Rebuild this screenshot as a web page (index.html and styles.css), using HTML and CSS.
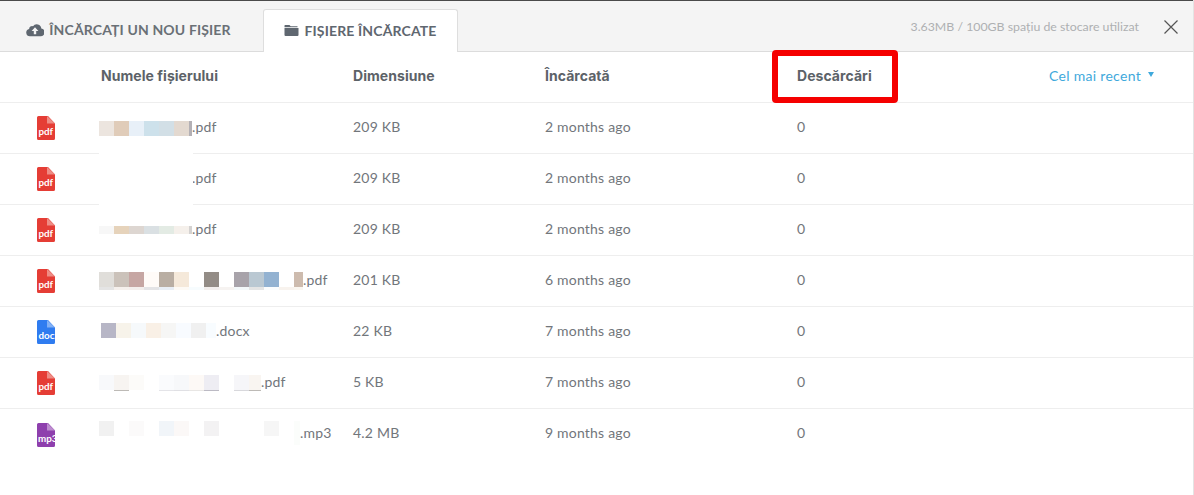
FILE: index.html
```html
<!DOCTYPE html>
<html lang="ro">
<head>
<meta charset="utf-8">
<title>Fișiere încărcate</title>
<link rel="stylesheet" href="styles.css">
</head>
<body>
<div class="modal">
  <header class="topbar">
    <div class="tab">
      <svg class="tab-icon" width="18" height="14" viewBox="0 0 18 14"><path fill="#5f6770" d="M4 13.2a3.7 3.7 0 0 1-.9-7.3A3 3 0 0 1 7 3.2 4.6 4.6 0 0 1 15.300 5.500 3.900 3.900 0 0 1 14 13.200z"/><path fill="#f4f4f4" d="M9 4.200l3.400 3.700h-2.200v3.300H7.800V7.900H5.600z"/></svg>
      <span>ÎNCĂRCAȚI UN NOU FIȘIER</span>
    </div>
    <div class="tab tab-active">
      <svg class="tab-icon" width="15" height="11" viewBox="0 0 15 11"><path fill="#5f6770" d="M1 0h4.500l1.200 1.200H13.500v1H.5V.5zM.5 3h14v7a1 1 0 0 1-1 1h-12a1 1 0 0 1-1-1z"/></svg>
      <span>FIȘIERE ÎNCĂRCATE</span>
    </div>
    <div class="storage">3.63MB / 100GB spațiu de stocare utilizat</div>
    <svg class="close" width="14" height="14" viewBox="0 0 14 14"><path fill="none" stroke="#555" stroke-width="1.200" d="M.5.5l13 13M13.500.5l-13 13"/></svg>
  </header>

  <div class="row head">
    <div></div>
    <div>Numele fișierului</div>
    <div>Dimensiune</div>
    <div>Încărcată</div>
    <div class="dl-cell">Descărcări<span class="highlight"></span></div>
    <div class="sort">Cel mai recent <span class="caret"></span></div>
  </div>

  <div class="row">
    <svg class="ficon" width="18" height="24" viewBox="0 0 18 24"><path class="pdf" d="M1.500 0H11l7 7.500V22.500A1.500 1.500 0 0 1 16.500 24h-15A1.500 1.500 0 0 1 0 22.500v-21A1.500 1.500 0 0 1 1.500 0z"/><path class="pdf-fold" d="M10 0l8 7.500h-8z"/><text x="1.500" y="19">pdf</text></svg>
    <div class="name"><span class="blur m18"><i class="a1"></i><i class="a2"></i><i class="a3"></i><i class="a4"></i><i class="a5"></i><i class="a6"></i><i class="a7 w4"></i></span>.pdf</div>
    <div>209 KB</div><div>2 months ago</div><div>0</div><div></div>
  </div>

  <div class="row">
    <svg class="ficon" width="18" height="24" viewBox="0 0 18 24"><path class="pdf" d="M1.500 0H11l7 7.500V22.500A1.500 1.500 0 0 1 16.500 24h-15A1.500 1.500 0 0 1 0 22.500v-21A1.500 1.500 0 0 1 1.500 0z"/><path class="pdf-fold" d="M10 0l8 7.500h-8z"/><text x="1.500" y="19">pdf</text></svg>
    <div class="name"><span class="blur blur-empty"></span>.pdf<span class="erase"></span></div>
    <div>209 KB</div><div>2 months ago</div><div>0</div><div></div>
  </div>

  <div class="row">
    <svg class="ficon" width="18" height="24" viewBox="0 0 18 24"><path class="pdf" d="M1.500 0H11l7 7.500V22.500A1.500 1.500 0 0 1 16.500 24h-15A1.500 1.500 0 0 1 0 22.500v-21A1.500 1.500 0 0 1 1.500 0z"/><path class="pdf-fold" d="M10 0l8 7.500h-8z"/><text x="1.500" y="19">pdf</text></svg>
    <div class="name"><span class="blur m21 short"><i class="b1"></i><i class="b2"></i><i class="b3"></i><i class="b4"></i><i class="b5"></i><i class="b6"></i><i class="b7 w4"></i></span>.pdf</div>
    <div>209 KB</div><div>2 months ago</div><div>0</div><div></div>
  </div>

  <div class="row">
    <svg class="ficon" width="18" height="24" viewBox="0 0 18 24"><path class="pdf" d="M1.500 0H11l7 7.500V22.500A1.500 1.500 0 0 1 16.500 24h-15A1.500 1.500 0 0 1 0 22.500v-21A1.500 1.500 0 0 1 1.500 0z"/><path class="pdf-fold" d="M10 0l8 7.500h-8z"/><text x="1.500" y="19">pdf</text></svg>
    <div class="name"><span class="blur m16"><i class="c1"></i><i class="c2"></i><i class="c3"></i><i class="c4"></i><i class="c5"></i><i class="c6"></i><i class="c0"></i><i class="c7"></i><i class="c00"></i><i class="c8"></i><i class="c9"></i><i class="c10"></i><i class="c000"></i><i class="c11 w9"></i></span>.pdf</div>
    <div>201 KB</div><div>6 months ago</div><div>0</div><div></div>
  </div>

  <div class="row">
    <svg class="ficon" width="18" height="24" viewBox="0 0 18 24"><path class="doc" d="M1.500 0H11l7 7.500V22.500A1.500 1.500 0 0 1 16.500 24h-15A1.500 1.500 0 0 1 0 22.500v-21A1.500 1.500 0 0 1 1.500 0z"/><path class="doc-fold" d="M10 0l8 7.500h-8z"/><text x="1.500" y="19">docx</text></svg>
    <div class="name"><span class="blur m16 blur-shift"><i class="d1"></i><i class="d2"></i><i class="d3"></i><i class="d4"></i><i class="d5"></i><i class="d6"></i><i class="d7"></i><i class="d8 w10"></i></span>.docx</div>
    <div>22 KB</div><div>7 months ago</div><div>0</div><div></div>
  </div>

  <div class="row">
    <svg class="ficon" width="18" height="24" viewBox="0 0 18 24"><path class="pdf" d="M1.500 0H11l7 7.500V22.500A1.500 1.500 0 0 1 16.500 24h-15A1.500 1.500 0 0 1 0 22.500v-21A1.500 1.500 0 0 1 1.500 0z"/><path class="pdf-fold" d="M10 0l8 7.500h-8z"/><text x="1.500" y="19">pdf</text></svg>
    <div class="name"><span class="blur m17"><i class="e1"></i><i class="e2"></i><i class="e3"></i><i></i><i class="e4"></i><i class="e5"></i><i class="e6"></i><i class="e7"></i><i></i><i class="e8"></i><i class="e9 w12"></i></span>.pdf</div>
    <div>5 KB</div><div>7 months ago</div><div>0</div><div></div>
  </div>

  <div class="row last">
    <svg class="ficon" width="18" height="24" viewBox="0 0 18 24"><path class="mp3" d="M1.500 0H11l7 7.500V22.500A1.500 1.500 0 0 1 16.500 24h-15A1.500 1.500 0 0 1 0 22.500v-21A1.500 1.500 0 0 1 1.500 0z"/><path class="mp3-fold" d="M10 0l8 7.500h-8z"/><text x="1" y="19">mp3</text></svg>
    <div class="name"><span class="blur m12"><i class="f1"></i><i></i><i class="f2"></i><i></i><i class="f3"></i><i class="f4"></i><i></i><i class="f5"></i><i></i><i></i><i></i><i class="f6"></i><i></i><i class="f7 w6"></i></span>.mp3</div>
    <div>4.2 MB</div><div>9 months ago</div><div>0</div><div></div>
  </div>
</div>
</body>
</html>
```
FILE: styles.css
```css
* { box-sizing: border-box; }
html, body { margin: 0; height: 100%; background: #fff; overflow: hidden; }
body { font-family: "Lato", "Liberation Sans", sans-serif; color: #72767b; }
.modal { height: 495px; border-right: 1px solid #e4e4e4; }

.topbar {
  display: flex; align-items: flex-end; height: 52px; padding-left: 10px;
  background: #f4f4f4; border-top: 1px solid #4a4a4a; border-bottom: 1px solid #dcdcdc;
}
.tab {
  display: flex; align-items: center; justify-content: center; gap: 5px;
  height: 43px; width: 237px; padding-bottom: 2px; margin-bottom: -1px;
  font-size: 14px; font-weight: 700; color: #6a7076; letter-spacing: .14px;
}
.tab-active {
  width: 195px; margin-left: 16px; background: #fff; color: #5f6770;
  border: 1px solid #dedede; border-bottom: 0; border-radius: 3px 3px 0 0;
}
.storage { margin-left: auto; align-self: center; font-size: 12.340px; color: #aeb0b2; margin-right: 25px; margin-top: 1px; }
.close { align-self: center; margin-right: 15px; margin-top: 2px; }

.row {
  display: grid; grid-template-columns: 101px 252px 192px 252px 120px 1fr; align-items: center;
  height: 51px; padding-bottom: 4px; border-bottom: 1px solid #eeeeee; font-size: 14px; letter-spacing: .2px;
}
.row.last { border-bottom: 0; }
.head { font-family: "Inter", "Lato", sans-serif; font-weight: 700; font-size: 14px; letter-spacing: .05px; color: #5c6268; }
.ficon { margin-left: 37px; margin-top: 4px; overflow: hidden; }
.ficon text { font: 700 9.800px "Lato", sans-serif; fill: #fff; letter-spacing: 0; }
.pdf { fill: #e53d35; } .pdf-fold { fill: #ee8c85; }
.doc { fill: #2f7cf0; } .doc-fold { fill: #82b0f5; }
.mp3 { fill: #8e3fad; } .mp3-fold { fill: #bd8ccf; }

.dl-cell { position: relative; }
.highlight {
  position: absolute; left: -25px; top: -17px; width: 126px; height: 53px;
  border: 6px solid #f50000; border-radius: 4px;
}
.sort {
  display: flex; align-items: center; justify-content: flex-end; gap: 7px; padding-right: 39px;
  font-family: "Lato", sans-serif; font-weight: 400; font-size: 14px; letter-spacing: .3px; color: #3fa9dc;
}
.caret { width: 0; height: 0; border-left: 3.500px solid transparent; border-right: 3.500px solid transparent; border-top: 5px solid #3fa9dc; margin-bottom: 2px; }

.name { position: relative; display: flex; align-items: center; align-self: stretch; }
.blur { display: flex; height: 15px; align-self: flex-start; margin-left: -2px; }
.blur i { display: block; width: 15px; height: 15px; flex: none; }
.blur.short, .blur.short i { height: 8px; }
.blur i.w4 { width: 3px; }
.blur i.w6 { width: 6px; }
.blur i.w9 { width: 9px; }
.blur i.w10 { width: 10px; }
.blur i.w12 { width: 12px; }
.m12 { margin-top: 12px; } .m16 { margin-top: 16px; } .m17 { margin-top: 17px; } .m18 { margin-top: 18px; } .m21 { margin-top: 21px; }
.blur-empty { width: 93px; height: 0; }
.blur-shift { margin-left: 0; }
.erase { position: absolute; left: -2px; top: -17px; width: 94px; height: 90px; background: #fff; }

.a1 { background: #ece5df; } .a2 { background: #e0ccb9; } .a3 { background: #e8f0f8; } .a4 { background: #cde1eb; } .a5 { background: #d2dfe6; } .a6 { background: #e3d9d0; } .a7 { background: #b3b0b5; }
.b1 { background: #f7f7f7; } .b2 { background: #e6d3bb; } .b3 { background: #ddd6d1; } .b4 { background: #dae0e3; } .b5 { background: #e3ebe4; } .b6 { background: #f5f0eb; } .b7 { background: #d4d2d1; }
.c1 { background: #e0deda; box-shadow: 0 3px #e4e4e4; } .c2 { background: #cbc2ba; box-shadow: 0 3px #f5f0ec; } .c3 { background: #c6a6a3; box-shadow: 0 3px #f3eeec; } .c4 { background: #fffbf8; box-shadow: 0 3px #e4e4e6; } .c5 { background: #b9aea3; box-shadow: 0 3px #e8eef5; } .c6 { background: #f5e9da; box-shadow: 0 3px #fdfaf5; } .c0 { box-shadow: 0 3px #f7fcfe; } .c7 { background: #938c86; box-shadow: 0 3px #f2eeec; } .c00 { box-shadow: 0 3px #f6f3f1; } .c8 { background: #a8a3aa; box-shadow: 0 3px #f3f8fa; } .c9 { background: #bac8d2; box-shadow: 0 3px #e4e4e4; } .c10 { background: #93b2d1; box-shadow: 0 3px #fafcfd; } .c000 { box-shadow: 0 3px #f8f3ee; } .c11 { background: #cdbbae; box-shadow: 0 3px #faf6f0; }
.d1 { background: #b7b6c6; } .d2 { background: #f7f3ea; } .d3 { background: #f6f9fb; } .d4 { background: #f9f0e6; } .d5 { background: #f6f6f5; } .d6 { background: #f8fbff; } .d7 { background: #f0f0f0; } .d8 { background: #f8fcff; }
.e1 { background: #f8f9fb; } .e2 { background: #f7f4f1; box-shadow: 0 1px #bdbab6; } .e3 { background: #fcfbf9; } .e4 { background: #fafbfd; box-shadow: 0 1px #e4e4e8; } .e5 { background: #f7f8fa; box-shadow: 0 1px #e0e0e4; } .e6 { background: #fdf9f6; box-shadow: 0 1px #e8e6e4; } .e7 { background: #eeedf3; box-shadow: 0 1px #bcbac4; } .e8 { background: #f6f6f9; box-shadow: 0 1px #d8d8dc; } .e9 { background: #f9f5f1; box-shadow: 0 1px #bdbab6; }
.f1 { background: #f1f1f1; } .f2 { background: #fbfafa; } .f3 { background: #f1f5f9; } .f4 { background: #fbf8f7; } .f5 { background: #f3f2f3; } .f6 { background: #f6f6f6; } .blur i.f7 { background: #fbfdfb; height: 24px; }
```
